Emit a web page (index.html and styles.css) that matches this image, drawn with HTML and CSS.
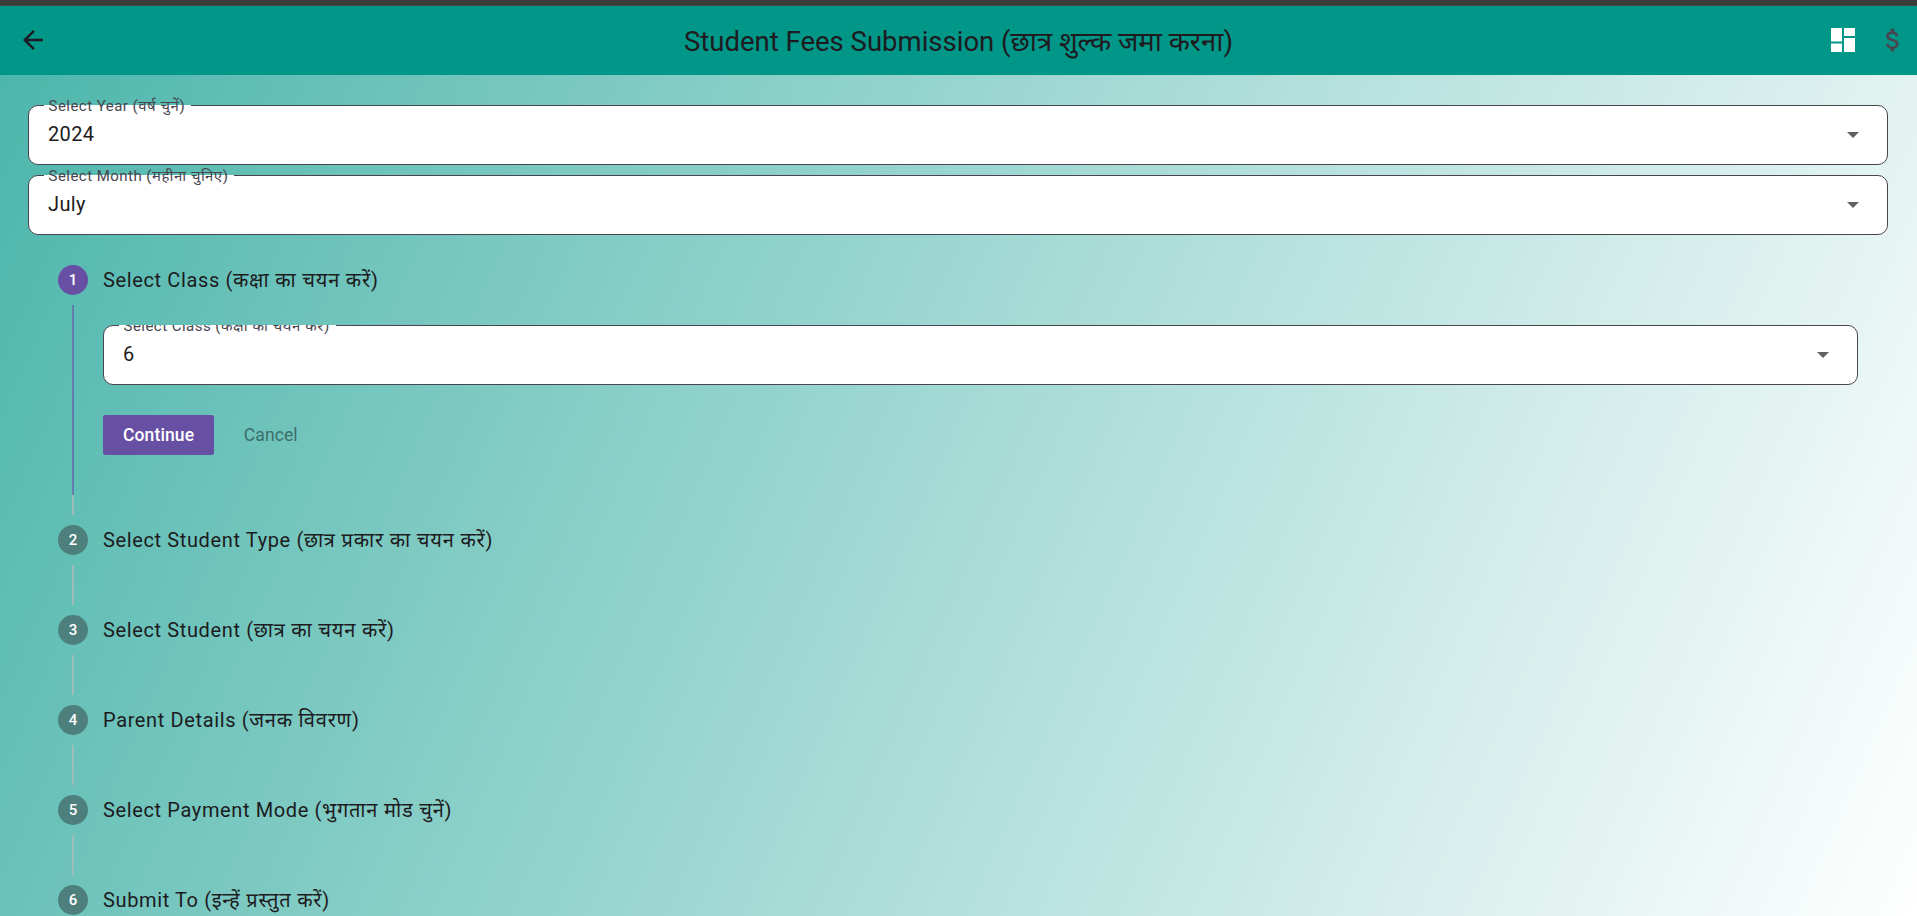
FILE: index.html
```html
<!DOCTYPE html>
<html lang="en">
<head>
<meta charset="utf-8">
<title>Student Fees Submission</title>
<link rel="stylesheet" href="styles.css">
</head>
<body>
<div class="window-edge"></div>
<header class="app-bar">
  <svg class="icon back" viewBox="0 0 24 24"><path d="M20 11H7.83l5.59-5.59L12 4l-8 8 8 8 1.41-1.41L7.83 13H20v-2z"/></svg>
  <h1 class="title">Student Fees Submission (<span lang="hi">छात्र शुल्क जमा करना</span>)</h1>
  <div class="actions">
    <svg class="icon dashboard" viewBox="0 0 24 24"><path d="M0 0h11v13.5H0zM13 0h11v8H13zM0 15.5h11V24H0zM13 10h11v14H13z"/></svg>
    <svg class="icon money" viewBox="0 0 24 24"><path d="M11.8 10.9c-2.27-.59-3-1.2-3-2.15 0-1.09 1.01-1.85 2.7-1.85 1.78 0 2.44.85 2.5 2.1h2.21c-.07-1.72-1.12-3.3-3.21-3.81V3h-3v2.16c-1.94.42-3.5 1.68-3.5 3.61 0 2.31 1.91 3.46 4.7 4.13 2.5.6 3 1.48 3 2.41 0 .69-.49 1.79-2.7 1.79-2.06 0-2.87-.92-2.98-2.1h-2.2c.12 2.19 1.76 3.42 3.68 3.83V21h3v-2.15c1.95-.37 3.5-1.5 3.5-3.55 0-2.84-2.43-3.81-4.7-4.4z"/></svg>
  </div>
</header>
<main class="page">
  <div class="field">
    <span class="label">Select Year (<span lang="hi">वर्ष चुनें</span>)</span>
    <span class="value">2024</span>
    <span class="caret"></span>
  </div>
  <div class="field">
    <span class="label">Select Month (<span lang="hi">महीना चुनिए</span>)</span>
    <span class="value">July</span>
    <span class="caret"></span>
  </div>
  <ol class="stepper">
    <li class="step active">
      <div class="rail"><span class="badge">1</span><span class="line current"></span><span class="line tail"></span></div>
      <div class="body">
        <h2 class="name">Select Class (<span lang="hi">कक्षा का चयन करें</span>)</h2>
        <div class="field clipped">
          <span class="label">Select Class (<span lang="hi">कक्षा का चयन करें</span>)</span>
          <span class="value">6</span>
          <span class="caret"></span>
        </div>
        <div class="buttons"><button class="btn primary">Continue</button><button class="btn">Cancel</button></div>
      </div>
    </li>
    <li class="step"><div class="rail"><span class="badge">2</span><span class="line"></span></div><h2 class="name">Select Student Type (<span lang="hi">छात्र प्रकार का चयन करें</span>)</h2></li>
    <li class="step"><div class="rail"><span class="badge">3</span><span class="line"></span></div><h2 class="name">Select Student (<span lang="hi">छात्र का चयन करें</span>)</h2></li>
    <li class="step"><div class="rail"><span class="badge">4</span><span class="line"></span></div><h2 class="name">Parent Details (<span lang="hi">जनक विवरण</span>)</h2></li>
    <li class="step"><div class="rail"><span class="badge">5</span><span class="line"></span></div><h2 class="name">Select Payment Mode (<span lang="hi">भुगतान मोड चुनें</span>)</h2></li>
    <li class="step"><div class="rail"><span class="badge">6</span></div><h2 class="name">Submit To (<span lang="hi">इन्हें प्रस्तुत करें</span>)</h2></li>
  </ol>
</main>
</body>
</html>
```
FILE: styles.css
```css
* { box-sizing: border-box; margin: 0; padding: 0; }
body {
  height: 916px;
  overflow: hidden;
  display: flex;
  flex-direction: column;
  font-family: Roboto, "Noto Sans Devanagari", "Noto Sans", sans-serif;
  color: #1d1b20;
}
.window-edge { height: 6px; flex: none; background: #3c3c3c; border-bottom: 1px solid #474c4b; }
.app-bar {
  height: 69px;
  flex: none;
  display: grid;
  grid-template-columns: 140px 1fr 140px;
  align-items: center;
  background: #009688;
}
.icon { display: block; width: 30px; height: 30px; fill: currentColor; margin-bottom: 2px; }
.back { margin-left: 18px; }
.title { padding-top: 1px; font-size: 27.5px; font-weight: 400; line-height: 35px; text-align: center; white-space: nowrap; }
.actions { display: flex; align-items: center; justify-content: flex-end; gap: 23px; padding-right: 9px; }
.dashboard { width: 24px; height: 24px; color: #fff; }
.money { color: #49454f; }
.page {
  flex: 1;
  min-height: 0;
  overflow: hidden;
  padding: 30px 29px 0 28px;
  background: linear-gradient(113.69deg, #4db6ac, #fff);
}
.field {
  position: relative;
  z-index: 0;
  display: flex;
  align-items: center;
  justify-content: space-between;
  height: 60px;
  margin-bottom: 10px;
  padding: 0 28px 0 19px;
  background: #fff;
  border: 1.25px solid #49454f;
  border-radius: 10px;
}
.label {
  position: absolute;
  top: -10px;
  left: 14.5px;
  padding: 0 6px 0 5px;
  font-size: 15px;
  line-height: 20px;
  letter-spacing: .47px;
  white-space: nowrap;
  color: #49454f;
}
/* gap in the outline behind the floating label */
.label::before {
  content: "";
  position: absolute;
  z-index: -1;
  top: 9px;
  left: 0;
  right: 0;
  height: 2px;
  background: #fff;
}
.label [lang="hi"] { letter-spacing: .55px; }
.clipped { clip-path: inset(0); }
.value { font-size: 20px; line-height: 30px; letter-spacing: .35px; margin-bottom: 2px; }
.caret { border: 6px solid transparent; border-top-color: #616161; border-bottom: 0; }
.stepper { list-style: none; padding: 20px 30px 0; }
.step { display: flex; gap: 15px; height: 90px; }
.step.active { height: 260px; }
.rail { flex: none; width: 30px; display: flex; flex-direction: column; align-items: center; }
.badge {
  width: 30px;
  height: 30px;
  flex: none;
  border-radius: 50%;
  background: #4d807d;
  color: #fff;
  font-size: 15px;
  font-weight: 500;
  line-height: 31px;
  text-align: center;
}
.line { width: 2px; height: 40px; margin-top: 10px; background: #9dbdb9; }
.active .badge { background: #6750a4; }
.line.current { height: 190px; background: #657dae; }
.line.tail { height: 20px; margin: 0; }
.body { flex: 1; }
.name { font-size: 20px; font-weight: 400; line-height: 30px; letter-spacing: .625px; white-space: nowrap; }
.name [lang="hi"] { letter-spacing: .8px; }
.body .field { margin: 30px 0; }
.buttons { display: flex; gap: 9.5px; }
.btn {
  height: 40px;
  padding: 0 20px;
  border: 0;
  border-radius: 2.5px;
  background: none;
  color: #3c6f6b;
  font: 400 17.5px/40px Roboto, sans-serif;
  letter-spacing: .125px;
}
.btn.primary { background: #6750a4; color: #fff; font-weight: 500; }
```
